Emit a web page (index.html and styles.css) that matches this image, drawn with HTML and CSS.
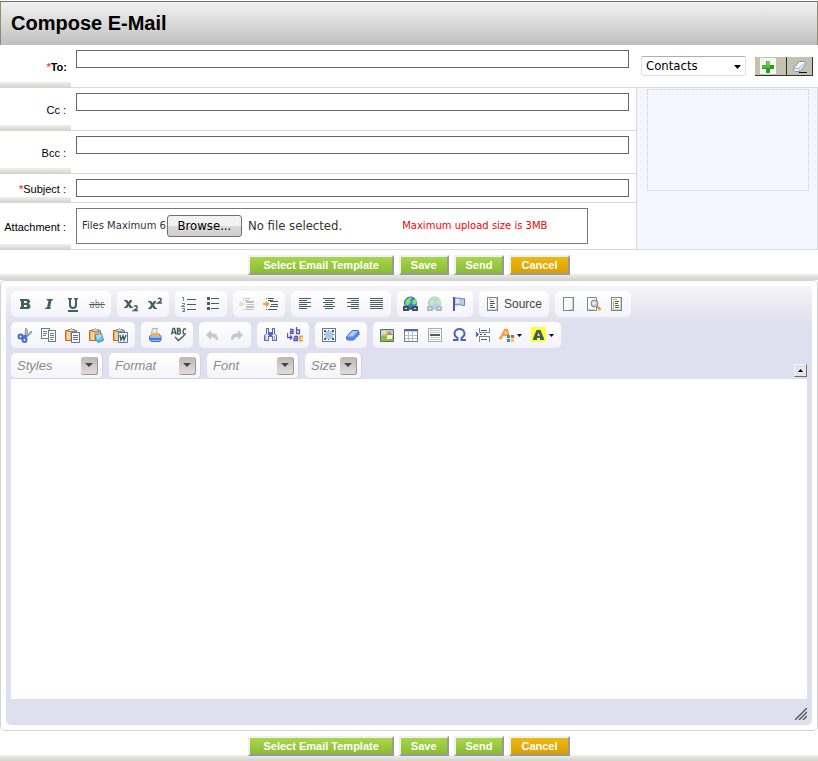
FILE: index.html
```html
<!DOCTYPE html>
<html lang="en">
<head>
<meta charset="utf-8">
<title>Compose E-Mail</title>
<link rel="stylesheet" href="styles.css">
</head>
<body>
<header class="title-bar"><h1>Compose E-Mail</h1></header>
<form class="mail">
  <div class="fields">
    <label class="name name-strong" for="to"><span class="req">*</span>To:</label>
    <div class="field field-tall"><input class="line" id="to" type="text"></div>
    <div class="contacts">
      <div class="picker">
        <select class="picker-select" aria-label="Contacts"><option>Contacts</option></select>
        <svg class="picker-arrow" width="7" height="4" viewBox="0 0 7 4"><path d="M0 0h7L3.500 4z"/></svg>
      </div>
      <div class="tools">
        <button class="tool" type="button" aria-label="Add contact"><svg width="16" height="16" viewBox="0 0 16 16"><path fill="#f2f5f0" d="M0 0h16v16H0z"/><path fill="#7cc95c" d="M6 3h4v4H6z"/><path fill="#2f9a22" d="M2 7h12v4h-4v4H6v-4H2z"/><path fill="#55b83c" d="M6 3h1v4h3v3H2V7h4z"/></svg></button>
        <button class="tool tool-small" type="button" aria-label="Clear contacts"><svg width="16" height="16" viewBox="0 0 16 16"><path fill="#eef4fc" stroke="#7f93b5" d="M1.500 10.500 7 3.500h5l2.500 2-6.500 8H3.500l-2-1z"/><path fill="none" stroke="#9caccb" d="M1.500 10.500h5l7.500-6M6.500 10.500 8 13"/><path stroke="#111" d="M7 14.500h8"/></svg></button>
      </div>
    </div>

    <label class="name" for="cc">Cc :</label>
    <div class="field field-tall"><input class="line" id="cc" type="text"></div>
    <div class="panel"><div class="panel-list"></div></div>

    <label class="name" for="bcc">Bcc :</label>
    <div class="field field-tall"><input class="line" id="bcc" type="text"></div>

    <label class="name" for="subject"><span class="req">*</span>Subject :</label>
    <div class="field"><input class="line" id="subject" type="text"></div>

    <label class="name" for="file">Attachment :</label>
    <div class="field">
      <div class="attach">
        <span class="hint">Files Maximum 6</span>
        <span class="file">
          <button class="browse" type="button" tabindex="-1">Browse...</button>
          <span>No file selected.</span>
          <input class="file-input" id="file" type="file">
        </span>
        <span class="hint limit">Maximum upload size is 3MB</span>
      </div>
    </div>
  </div>

  <div class="actions">
    <button class="btn btn-wide" type="button">Select Email Template</button>
    <button class="btn" type="button">Save</button>
    <button class="btn" type="button">Send</button>
    <button class="btn btn-cancel" type="button">Cancel</button>
  </div>

  <div class="editor">
    <div class="editor-body">
      <div class="bar">
        <div class="group">
          <button class="icon" type="button" aria-label="Bold"><svg viewBox="0 0 16 16"><path fill="#42605f" fill-rule="evenodd" d="M3 3h7q3 0 3 2.700 0 1.500-1.500 2.100Q13.500 8.400 13.500 10.200 13.500 13 10 13H3v-2h1V5H3zM7 5v2h2q1 0 1-1T9 5zm0 4v2h2q1.200 0 1.200-1T9 9z"/></svg></button>
          <button class="icon" type="button" aria-label="Italic"><svg viewBox="0 0 16 16"><path fill="#42605f" d="M6 3h6l-.5 1.500H10.500L9 11.500H10L9.500 13H4l.5-1.500H6L7.500 4.500h-2z"/></svg></button>
          <button class="icon" type="button" aria-label="Underline"><svg viewBox="0 0 16 16"><path fill="#42605f" d="M3 2h4v1.500H6V9q0 2 2 2t2-2V3.500H9V2h4v1.500h-1V9q0 4-4 4T4 9V3.500H3zM3 14h10v2H3z"/></svg></button>
          <button class="icon" type="button" aria-label="Strikethrough"><svg viewBox="0 0 16 16" fill="none" stroke="#7d9090"><path d="M1.500 6.500h3v5h-3v-2.500h3M7 3.500v8h3v-5H7M15 6.500h-2.500v5H15"/><path stroke="#42605f" d="M0 8.500h16"/></svg></button>
        </div>
        <div class="group">
          <button class="icon" type="button" aria-label="Subscript"><svg viewBox="0 0 16 16" fill="none" stroke="#42605f"><path stroke-width="2.200" d="m3 4.500 5 7m0-7-5 7"/><path d="M1 4.500h3m3 0h2M1 11.500h3m3 0h3"/><path stroke-width="1.500" d="M11 10.500q2-1.500 3 0T11 14.500h4"/></svg></button>
          <button class="icon" type="button" aria-label="Superscript"><svg viewBox="0 0 16 16" fill="none" stroke="#42605f"><path stroke-width="2.200" d="m3 5.500 5 7m0-7-5 7"/><path d="M1 5.500h3m3 0h2M1 12.500h3m3 0h3"/><path stroke-width="1.500" d="M11 3q2-1.500 3 0T11 7h4"/></svg></button>
        </div>
        <div class="group">
          <button class="icon" type="button" aria-label="Numbered list"><svg class="crisp" viewBox="0 0 16 16" fill="none" stroke="#42605f"><path stroke="#788c8b" d="M1 1.500h1.500V5M1 7.500h2.500v1L1 10.500h3M1 12.500h2.500v3H1M2 14h1"/><path d="M6 3.500h9m-9 5h9m-9 5h9"/></svg></button>
          <button class="icon" type="button" aria-label="Bulleted list"><svg class="crisp" viewBox="0 0 16 16" fill="#42605f"><path d="M2 1h3v3H2zm0 5h3v3H2zm0 5h3v3H2zm4-9h8v1H6zm0 5h8v1H6zm0 5h8v1H6z"/></svg></button>
        </div>
        <div class="group">
          <button class="icon faded" type="button" aria-label="Decrease indent"><svg class="crisp" viewBox="0 0 16 16"><path fill="#ff9d34" d="M0 7h6v2H0zM2 5h1v6H2zM1 6h1v4H1z"/><path fill="#42605f" d="M4 2h1v1H4zm2 0h5v1H6zm1 3h8v2H7zm1 3h7v1H8zM7 10h8v2H7zm-3 3h1v1H4zm2 0h8v1H6zM4 4h1v1H4zm2 0h4v1H6z"/></svg></button>
          <button class="icon" type="button" aria-label="Increase indent"><svg class="crisp" viewBox="0 0 16 16"><path fill="#ff9d34" d="M0 7h6v2H0zM3 5h1v6H3zm1 1h1v4H4z"/><path fill="#42605f" d="M3 2h1v1H3zm2 0h6v1H5zm2 3h8v1H7zm1 3h7v1H8zm-1 2h8v1H7zm-4 3h1v1H3zm2 0h9v1H5zM5 4h5v1H5z"/></svg></button>
        </div>
        <div class="group">
          <button class="icon" type="button" aria-label="Align left"><svg class="crisp" viewBox="0 0 16 16" stroke="#42605f"><path d="M2 2.500h12M2 4.500h8M2 6.500h12M2 8.500h8M2 10.500h12M2 12.500h8"/></svg></button>
          <button class="icon" type="button" aria-label="Centre"><svg class="crisp" viewBox="0 0 16 16" stroke="#42605f"><path d="M2 2.500h12M4 4.500h8M2 6.500h12M4 8.500h8M2 10.500h12M4 12.500h8"/></svg></button>
          <button class="icon" type="button" aria-label="Align right"><svg class="crisp" viewBox="0 0 16 16" stroke="#42605f"><path d="M2 2.500h12M6 4.500h8M2 6.500h12M6 8.500h8M2 10.500h12M6 12.500h8"/></svg></button>
          <button class="icon" type="button" aria-label="Justify"><svg class="crisp" viewBox="0 0 16 16" stroke="#42605f"><path d="M1 2.500h13M1 4.500h13M1 6.500h13M1 8.500h13M1 10.500h13M1 12.500h13"/></svg></button>
        </div>
        <div class="group">
          <button class="icon" type="button" aria-label="Link"><svg viewBox="0 0 16 16"><circle cx="7.500" cy="7" r="6" fill="#437ee0" stroke="#285e9b"/><path fill="#82e36a" d="M3 4l4-3 2 1-2 2 1 2-3 3H2zm7 0 3-1 1 4-3 2-2-2z"/><path fill="#e8eeee" stroke="#3c5757" stroke-width="2" d="M1 11h4v3H1zm9 0h4v3h-4zM5 12.500h5"/></svg></button>
          <button class="icon dim" type="button" aria-label="Unlink"><svg viewBox="0 0 16 16"><circle cx="7.500" cy="7" r="6" fill="#7fa9ed" stroke="#527fb8"/><path fill="#82e36a" d="M3 4l4-3 2 1-2 2 1 2-3 3H2zm7 0 3-1 1 4-3 2-2-2z"/><path fill="#e8eeee" stroke="#6f8282" stroke-width="2" d="M1 11h4v3H1zm9 0h4v3h-4z"/></svg></button>
          <button class="icon" type="button" aria-label="Anchor"><svg viewBox="0 0 16 16"><path fill="#c2cbd6" stroke="#4f86e0" d="M3.500 1.500q2 1 4 .5 2 1.500 6 .5v7q-3 0-5-1-2 1-5 0z"/><path fill="#e8edf4" d="M5 3h3v4H5z"/><path stroke="#4b55c4" stroke-width="2" d="M3 1v14"/></svg></button>
        </div>
        <div class="group">
          <button class="source" type="button"><svg class="crisp" width="16" height="16" viewBox="0 0 16 16"><path fill="#fff" stroke="#78898a" d="M2.500 1.500h10v13h-10z"/><path fill="#c9d1d1" d="M11 2h1v12H3v-1h8z"/><path stroke="#ff9d34" d="M4 3.500h3"/><path stroke="#42605f" d="M5 5.500h4M5 7.500h5M5 9.500h3M5 11.500h5"/></svg><span>Source</span></button>
        </div>
        <div class="group">
          <button class="icon" type="button" aria-label="New page"><svg class="crisp" viewBox="0 0 16 16"><path fill="#fff" stroke="#78898a" d="M2.500 1.500h10v13h-10z"/><path fill="#c9d1d1" d="M11 2h1v12H8v-1h3z"/></svg></button>
          <button class="icon" type="button" aria-label="Preview"><svg viewBox="0 0 16 16"><path fill="#fff" stroke="#78898a" d="M2.500 1.500h9v13h-9z"/><path fill="#c9d1d1" d="M3 13h7v1H3z"/><circle cx="9.500" cy="7.500" r="3.500" fill="#c6ced2" stroke="#728488"/><circle cx="9" cy="7" r="1.500" fill="#f0f3f4"/><path stroke="#f08b25" stroke-width="2" d="m12 10 3.500 4"/></svg></button>
          <button class="icon" type="button" aria-label="Templates"><svg class="crisp" viewBox="0 0 16 16"><path fill="#fff" stroke="#78898a" d="M2.500 1.500h10v13h-10z"/><path fill="#c9d1d1" d="M11 2h1v12H3v-1h8z"/><path stroke="#ff9d34" d="M4 3.500h4M4.500 5v8"/><path stroke="#42605f" d="M6 5.500h4M6 7.500h3M6 9.500h4M6 11.500h4"/></svg></button>
        </div>
      </div>

      <div class="bar">
        <div class="group">
          <button class="icon" type="button" aria-label="Cut"><svg viewBox="0 0 16 16"><path fill="#b4bdbd" stroke="#8b9898" d="M8.500 1.500h1l1.500 5-2 3-1-1zM14.500 4v2L10 10H8.500z"/><g fill="#fff" stroke="#426bd6" stroke-width="2"><circle cx="3.500" cy="9.500" r="2"/><circle cx="7.500" cy="13" r="2"/><path d="m5.500 9.500 3-.5v2"/></g></svg></button>
          <button class="icon" type="button" aria-label="Copy"><svg class="crisp" viewBox="0 0 16 16" stroke="#66807f" fill="#fff"><path d="M.5 1.500h8v10h-8z"/><path d="M2 4.500h4M2 6.500h4M2 8.500h3"/><path d="M7.500 3.500h7v11h-7z"/><path d="M9 6.500h4M9 8.500h4M9 10.500h4M9 12.500h3"/></svg></button>
          <button class="icon" type="button" aria-label="Paste"><svg viewBox="0 0 16 16"><path fill="#f3a850" stroke="#b86f28" d="M.5 3.500h11v10H.5z"/><path fill="#ffd28c" d="M2 5h3v8H2z"/><path fill="#dce2e3" stroke="#7d8a8b" d="M3.500 4.500v-2h2l1-1 1 1h2v2z"/><path fill="#fff" stroke="#5969c9" d="M6.500 5.500h8v10h-8z"/><path stroke="#5969c9" d="M8 8.500h5M8 10.500h5M8 12.500h5"/></svg></button>
          <button class="icon" type="button" aria-label="Paste as plain text"><svg viewBox="0 0 16 16"><path fill="#f3a850" stroke="#b86f28" d="M.5 3.500h11v10H.5z"/><path fill="#ffd28c" d="M2 5h3v8H2z"/><path fill="#dce2e3" stroke="#7d8a8b" d="M3.500 4.500v-2h2l1-1 1 1h2v2z"/><path fill="#63bde8" stroke="#3792c5" d="m6.500 8 6-1.500 2 7L9 15.500 6.500 12z"/><path fill="#9bdcf4" d="m7 8 5-1 1 3-5 3z"/></svg></button>
          <button class="icon" type="button" aria-label="Paste from Word"><svg viewBox="0 0 16 16"><path fill="#f3a850" stroke="#b86f28" d="M.5 3.500h11v10H.5z"/><path fill="#ffd28c" d="M2 5h3v8H2z"/><path fill="#dce2e3" stroke="#7d8a8b" d="M3.500 4.500v-2h2l1-1 1 1h2v2z"/><path fill="#fff" stroke="#4b74ce" d="M5.500 5.500h9v10h-9z"/><path fill="none" stroke="#42605f" stroke-width="1.500" d="m7 8 1 5 2-4 1 4 2-5"/></svg></button>
        </div>
        <div class="group">
          <button class="icon" type="button" aria-label="Print"><svg viewBox="0 0 16 16"><path fill="#e9edf2" stroke="#a9b2bd" d="M4.500 6.500 5.500 1.500h5l-1 5z"/><path fill="#94bdf5" stroke="#4569cd" d="m2.500 9.500 2-2h8l1.500 2v3.500l-1 1.500H4l-1.500-2z"/><path fill="#4878d8" d="M3 11h11v2H3z"/><path fill="#ffad48" d="M4 6h8v3H4z"/></svg></button>
          <button class="icon" type="button" aria-label="Check spelling"><svg viewBox="0 0 16 16" fill="none" stroke="#42605f" stroke-width="1.400"><path d="M.5 7.500 2 1.500h1.500L5 7.500M1.500 5.500h3M6.500 7V1.500h2q1.500 1.200 0 2.500h-2 2q2 1.500 0 3zM15 2h-2q-2 2.500 0 5h2"/><path d="m4 10 3.500 3.500 6-5.500"/></svg></button>
        </div>
        <div class="group">
          <button class="icon" type="button" aria-label="Undo"><svg viewBox="0 0 16 16" fill="#c2cacc"><path d="m1 8 5-5v3q7 0 7 6v1h-2q-1-3-5-3v3z"/></svg></button>
          <button class="icon" type="button" aria-label="Redo"><svg viewBox="0 0 16 16" fill="#c2cacc"><path d="M14 8 9 3v3q-7 0-7 6v1h2q1-3 5-3v3z"/></svg></button>
        </div>
        <div class="group">
          <button class="icon" type="button" aria-label="Find"><svg class="crisp" viewBox="0 0 16 16"><path fill="#dfe5ec" stroke="#5d6dc0" d="M3.500 1.500h2v4h4v-4h2v5l2 2v5h-4v-4h-4v4h-4v-5l2-2z"/><path fill="#5d65b9" d="M5 2h1v6H5zm4 0h1v6H9zM6 6h3v3H6z"/><path fill="#a6b0b6" d="M2 9h1v4H2zm9 0h1v4h-1z"/></svg></button>
          <button class="icon" type="button" aria-label="Replace"><svg viewBox="0 0 16 16" fill="none" stroke="#5556b9" stroke-width="1.300"><path d="M3 2.500h3v4H3.500v-2H6M9.500 0v6.500h3V3h-3M.5 6v4.500h4M3 8.500l2 2-2 2M7 9.500h3.500v4H7v-2h3"/><path stroke="#ff9d34" stroke-width="1.800" d="M16 9.500h-3v4h3"/></svg></button>
        </div>
        <div class="group">
          <button class="icon" type="button" aria-label="Select all"><svg class="crisp" viewBox="0 0 16 16"><path fill="#fff" stroke="#667b7d" d="M1.500 1.500h13v13h-13z"/><path fill="#a9c8f5" d="M4 4h8v8H4z"/><path fill="#42605f" d="M3 3h2v2H3zm8 0h2v2h-2zM3 11h2v2H3zm8 0h2v2h-2zM7 3h1v1H7zM7 12h1v1H7zM3 7h1v1H3zm9 0h1v1h-1z"/></svg></button>
          <button class="icon" type="button" aria-label="Remove format"><svg viewBox="0 0 16 16"><path fill="#5a8ae8" stroke="#4665bd" d="M1.500 10 7 3.500h6l1 1.500v2.500L8.500 13h-6l-1-1.500z"/><path fill="#a9ccfb" d="M2.500 9.500 7.500 4H13L8 9.500z"/></svg></button>
        </div>
        <div class="group">
          <button class="icon" type="button" aria-label="Image"><svg viewBox="0 0 16 16"><path fill="#a1d4f5" stroke="#54706f" d="M1.500 2.500h13v12h-13z"/><path fill="#ffe15a" d="M3 4h4v3H3z"/><path fill="#8fc13e" d="M2 9q5-2 12 1v4H2z"/><path fill="#fff1d5" d="M8 8h5v4H8z"/><path fill="#ee7c38" d="m7 8 3-4 4 4z"/></svg></button>
          <button class="icon" type="button" aria-label="Table"><svg class="crisp" viewBox="0 0 16 16"><path fill="#fff" stroke="#75858c" d="M1.500 2.500h13v12h-13z"/><path stroke="#b7bfc4" d="M2 8.500h12M2 11.500h12M5.500 5v9M9.500 5v9"/><path fill="#4867bd" d="M1 2h14v2H1z"/><path fill="#c8d0dc" d="M2 4h12v1H2z"/></svg></button>
          <button class="icon" type="button" aria-label="Horizontal line"><svg class="crisp" viewBox="0 0 16 16"><path fill="#fff" stroke="#a6abab" d="M1.500 1.500h13v13h-13z"/><path fill="#42605f" d="M3 7h10v2H3z"/><path stroke="#c2c6c6" d="M3 3.500h10M3 5.500h10M3 10.500h10M3 12.500h10"/></svg></button>
          <button class="icon" type="button" aria-label="Special character"><svg viewBox="0 0 16 16" fill="none" stroke="#4b63bd" stroke-width="2"><path d="M2 13h4.500v-2Q3 9 3.500 6q1-4 5-4t5 4q.5 3-3 5v2H15"/></svg></button>
          <button class="icon" type="button" aria-label="Page break"><svg class="crisp" viewBox="0 0 16 16"><path fill="#4b63bd" d="M1 5v5l3-2.500z"/><path fill="#fff" stroke="#78898a" d="M4.500 1v4.500h10V1M4.500 15V9.500h10V15"/><path stroke="#42605f" d="M6 3.500h6M6 12.500h6M5 7.500h2m2 0h2"/></svg></button>
          <button class="icon icon-menu" type="button" aria-label="Text colour"><svg viewBox="0 0 16 16"><path fill="none" stroke="#f3a04b" stroke-width="2.400" d="M0 11h3M2 10.500 6 3h2l1.500 7M4 8h5"/><path fill="#3aa843" d="M8 8h3v3H8z"/><path fill="#ef4b48" d="M12 8h3v3h-3z"/><path fill="#4284e8" d="M8 12h3v3H8z"/><path fill="#f8c545" d="M12 12h3v3h-3z"/></svg><svg class="caret" viewBox="0 0 5 3"><path d="M0 0h5L2.500 3z"/></svg></button>
          <button class="icon icon-menu" type="button" aria-label="Background colour"><svg viewBox="0 0 16 16"><path fill="#ffff3c" d="M0 0h15v15H0z"/><path fill="#42605f" fill-rule="evenodd" d="M2 11.500 5.500 3h4L13 11.500V13H9v-2H6v2H2zM6.500 9h2.300L7.600 5.500z"/></svg><svg class="caret" viewBox="0 0 5 3"><path d="M0 0h5L2.500 3z"/></svg></button>
        </div>
      </div>

      <div class="bar bar-combos">
        <button class="combo" type="button"><span>Styles</span><span class="combo-open"><svg width="8" height="4" viewBox="0 0 8 4"><path d="M0 0h8L4 4z"/></svg></span></button>
        <button class="combo" type="button"><span>Format</span><span class="combo-open"><svg width="8" height="4" viewBox="0 0 8 4"><path d="M0 0h8L4 4z"/></svg></span></button>
        <button class="combo" type="button"><span>Font</span><span class="combo-open"><svg width="8" height="4" viewBox="0 0 8 4"><path d="M0 0h8L4 4z"/></svg></span></button>
        <button class="combo combo-size" type="button"><span>Size</span><span class="combo-open"><svg width="8" height="4" viewBox="0 0 8 4"><path d="M0 0h8L4 4z"/></svg></span></button>
        <button class="collapse" type="button" aria-label="Collapse toolbar"><svg width="5" height="3" viewBox="0 0 5 3"><path d="M0 3h5L2.500 0z"/></svg></button>
      </div>

      <textarea class="message" aria-label="Message"></textarea>
      <div class="editor-foot"><svg width="12" height="12" viewBox="0 0 12 12" stroke="#555" stroke-width="1.400"><path d="M0 12 12 0M4 12l8-8M8 12l4-4"/></svg></div>
    </div>
  </div>

  <div class="actions">
    <button class="btn btn-wide" type="button">Select Email Template</button>
    <button class="btn" type="button">Save</button>
    <button class="btn" type="button">Send</button>
    <button class="btn btn-cancel" type="button">Cancel</button>
  </div>
</form>
</body>
</html>
```
FILE: styles.css
```css
* {
  box-sizing: border-box;
}

body {
  margin: 0;
  background: #fff;
  color: #000;
  font: 11px/14px "Liberation Sans", Arial, sans-serif;
}

button,
input,
select,
textarea {
  margin: 0;
  padding: 0;
  font: inherit;
  color: inherit;
  border-radius: 0;
}

svg {
  display: block;
  flex: none;
}

.crisp {
  shape-rendering: crispEdges;
}

.title-bar {
  margin-top: 1px;
  padding: 10px;
  border: 1px solid #8f8f70;
  border-top-color: #707070;
  border-bottom: 0;
  background: linear-gradient(#f2f2f2, #c0c0c0);
}

.title-bar h1 {
  margin: 0;
  font-size: 20px;
  line-height: 23px;
}

/* Address fields */
.fields {
  display: grid;
  grid-template-columns: 71px minmax(0, 1fr) 182px;
}

.name {
  grid-column: 1;
  display: flex;
  align-items: center;
  justify-content: flex-end;
  padding-right: 5px;
  background: linear-gradient(#f0f0ea, #d2d2ce) bottom / 100% 6px no-repeat;
}

.name-strong {
  font-weight: bold;
  padding-right: 4px;
}

.req {
  color: #f00;
  font-weight: normal;
}

.field {
  grid-column: 2;
  padding: 5px 7px 5px 5px;
  border-bottom: 1px solid #d8d8d8;
}

.field-tall {
  padding-bottom: 19px;
}

.line {
  display: block;
  width: 100%;
  height: 18px;
  padding: 0 2px;
  border: 1px solid #666;
  background: #fff;
}

.contacts {
  grid-column: 3;
  display: flex;
  align-items: center;
  justify-content: space-between;
  padding: 0 5px;
  border-bottom: 1px solid #d8d8d8;
}

.picker {
  position: relative;
  width: 105px;
}

.picker-select {
  display: block;
  width: 100%;
  height: 20px;
  padding: 0 4px;
  appearance: none;
  border: 1px solid #dde0e8;
  border-top-color: #abadb3;
  border-radius: 2px;
  background: #fff;
  font: 13px/18px "DejaVu Sans Condensed", "DejaVu Sans", sans-serif;
}

.picker-arrow {
  position: absolute;
  right: 5px;
  top: 9px;
  pointer-events: none;
}

.tools {
  display: flex;
}

.tool {
  display: flex;
  align-items: center;
  width: 32px;
  height: 19px;
  padding-left: 5px;
  border: solid #333;
  border-width: 0 1px 1px 0;
  background: #c3c1b0;
}

.tool-small {
  width: 26px;
}

.panel {
  grid-column: 3;
  grid-row: 2 / span 4;
  padding: 1px 8px 0 10px;
  border: 1px solid #d8d8e0;
  border-top: 0;
  background: #f5f5ff;
}

.panel-list {
  height: 102px;
  border: 1px dotted #ccc;
}

.attach {
  display: flex;
  align-items: center;
  max-width: 512px;
  height: 36px;
  padding-left: 5px;
  border: 1px solid #777;
}

.hint {
  font: 10px/12px "DejaVu Sans", sans-serif;
  color: #333;
  white-space: nowrap;
}

.limit {
  color: #f00;
  margin-left: 60px;
}

.file {
  position: relative;
  display: flex;
  align-items: center;
  gap: 6px;
  margin-left: 1px;
  color: #333;
  font: 13px/16px "DejaVu Sans Condensed", "DejaVu Sans", sans-serif;
  white-space: nowrap;
}

.browse {
  width: 75px;
  height: 22px;
  border: 1px solid #707070;
  border-radius: 3px;
  background: linear-gradient(#f2f2f2 50%, #dadada 50%, #cfcfcf);
  color: #000;
}

.file-input {
  position: absolute;
  inset: 0;
  width: 100%;
  opacity: 0;
}

/* Action buttons */
.actions {
  display: flex;
  justify-content: center;
  gap: 5px;
  padding: 5px 0;
  background: linear-gradient(#f0f0ea, #d2d2ce) bottom / 100% 6px no-repeat;
}

.btn {
  height: 20px;
  padding: 0 10px;
  border: 2px solid;
  border-color: #f0f0f0 #999 #999 #f0f0f0;
  background: linear-gradient(#a8d64a, #8cbc34);
  color: #fff;
  font-weight: bold;
  line-height: 16px;
}

.btn-wide {
  padding: 0 13px;
}

.btn-cancel {
  background: linear-gradient(#ecb912, #d8a002);
}

/* Rich text editor */
.editor {
  padding: 5px;
  border: 1px solid #d3d3d3;
  border-radius: 5px;
  background: #fff;
}

.editor-body {
  padding: 5px 5px 0;
  border-radius: 5px;
  background: #e0dff0 linear-gradient(#f4f4f8, #dfdeed) top / 100% 40px no-repeat;
}

.bar {
  display: flex;
  flex-wrap: wrap;
  gap: 6px;
  margin-bottom: 5px;
}

.bar-combos {
  margin-bottom: 0;
}

.group {
  display: flex;
  padding: 2px;
  border-radius: 5px;
  background: linear-gradient(#fff, #f3f3fa);
}

.icon,
.source {
  display: flex;
  align-items: center;
  height: 22px;
  padding: 0 4px;
  border: 0;
  background: none;
}

.icon svg {
  width: 16px;
  height: 16px;
}

.icon-menu {
  gap: 2px;
  width: 32px;
}

.icon .caret {
  width: 5px;
  height: 3px;
}

.faded {
  opacity: 0.35;
}

.dim {
  opacity: 0.5;
}

.source {
  gap: 3px;
  width: 66px;
  color: #444;
  font-size: 12px;
}

.combo {
  display: flex;
  align-items: center;
  justify-content: space-between;
  width: 92px;
  height: 26px;
  padding: 0 4px 0 6px;
  border: solid #d5d4dd;
  border-width: 0 1px 1px 0;
  border-radius: 5px;
  background: linear-gradient(#fff, #f5f5fa);
  color: #888;
  font-size: 13px;
  font-style: italic;
}

.combo-size {
  width: 57px;
}

.combo-open {
  display: grid;
  place-items: center;
  width: 17px;
  height: 18px;
  border: solid #9a9494;
  border-width: 0 1px 1px 0;
  border-radius: 3px;
  background: linear-gradient(#c1b6b8, #e2dcdd);
  fill: #444;
}

.collapse {
  display: grid;
  place-items: center;
  align-self: flex-end;
  width: 13px;
  height: 13px;
  margin: 0 0 2px auto;
  border: 1px solid;
  border-color: #f4f4f4 #706f70 #706f70 #f4f4f4;
  background: #e4e4e4;
}

.message {
  display: block;
  width: 100%;
  height: 320px;
  padding: 8px;
  border: 0;
  resize: none;
  background: #fff;
}

.editor-foot {
  display: flex;
  justify-content: flex-end;
  padding: 9px 0 5px;
}
```
